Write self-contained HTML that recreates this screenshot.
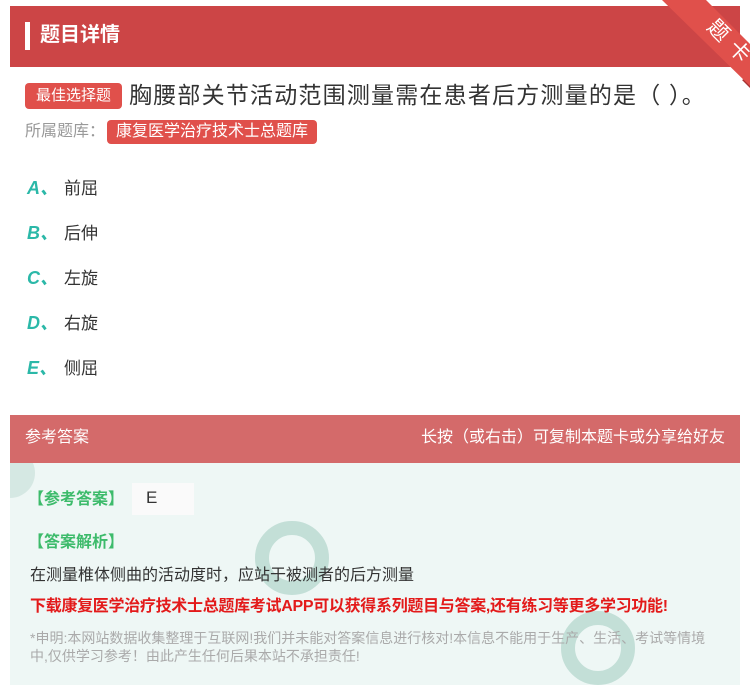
<!DOCTYPE html>
<html><head><meta charset="utf-8"><style>
*{margin:0;padding:0;box-sizing:border-box}
body{width:750px;height:685px;background:#fff;font-family:"Liberation Sans","Noto Sans CJK SC",sans-serif;position:relative;overflow:hidden}
.hd{position:absolute;left:10px;top:6px;width:730px;height:61px;background:#cc4546}
.hd .bar{position:absolute;left:15px;top:16px;width:5px;height:28px;background:#fff}
.hd .t{position:absolute;left:30px;top:15px;color:#fff;font-size:20px;font-weight:bold;line-height:28px}
.q{position:absolute;left:25px;top:80px;font-size:23px;color:#333;line-height:30px;white-space:nowrap;letter-spacing:1.2px}
.tag{display:inline-block;background:#e0504b;color:#fff;font-size:15px;border-radius:4px;padding:0 11px;line-height:26px;vertical-align:3px;margin-right:7px;letter-spacing:0}
.lib{position:absolute;left:25px;top:120px;font-size:16px;color:#999;line-height:24px}
.lib .tag{font-size:16px;line-height:24px;vertical-align:0;margin-left:2px;padding:0 9px}
.opt{position:absolute;left:27px;font-size:17px;color:#333;line-height:24px}
.opt b{color:#2bb8a8;font-style:italic;font-size:18px;display:inline-block;width:37px}
.ab{position:absolute;left:10px;top:415px;width:730px;height:48px;background:#d46a6a;color:#fff;font-size:16px;line-height:46px;padding:0 15px}
.ab span{float:right}
.bd{position:absolute;left:10px;top:463px;width:730px;height:222px;background:#eef7f5;overflow:hidden}
.g{color:#3dbb6b;font-size:16px;font-weight:bold;position:absolute;left:18px}
</style></head><body>
<div class="hd"><div class="bar"></div><div class="t">题目详情</div></div>
<svg width="750" height="100" style="position:absolute;left:0;top:0">
<polygon points="742,80 750,88 750,76" fill="#a83232"/>
<polygon points="662,0 706,0 750,44 750,86" fill="#e0504b"/>
<text x="0" y="0" fill="#fff" font-size="21" font-family="Noto Sans CJK SC, sans-serif" transform="translate(706,28) rotate(45)">题</text>
<text x="0" y="0" fill="#fff" font-size="21" font-family="Noto Sans CJK SC, sans-serif" transform="translate(727,49) rotate(45)">卡</text>
</svg>
<div class="q"><span class="tag">最佳选择题</span>胸腰部关节活动范围测量需在患者后方测量的是（ ）。</div>
<div class="lib">所属题库：<span class="tag">康复医学治疗技术士总题库</span></div>
<div class="opt" style="top:176px"><b>A、</b>前屈</div>
<div class="opt" style="top:221px"><b>B、</b>后伸</div>
<div class="opt" style="top:266px"><b>C、</b>左旋</div>
<div class="opt" style="top:311px"><b>D、</b>右旋</div>
<div class="opt" style="top:356px"><b>E、</b>侧屈</div>
<div class="ab">参考答案<span>长按（或右击）可复制本题卡或分享给好友</span></div>
<div class="bd">
<svg width="730" height="222" style="position:absolute;left:0;top:0">
<circle cx="282" cy="95" r="30" fill="none" stroke="#b8d8cf" stroke-width="14" opacity=".8"/>
<circle cx="588" cy="185" r="30" fill="none" stroke="#b8d8cf" stroke-width="14" opacity=".8"/>
<circle cx="0" cy="10" r="25" fill="#d5e8e3"/>
</svg>
<div class="g" style="top:22px">【参考答案】</div>
<div style="position:absolute;left:122px;top:20px;width:62px;height:32px;background:#fafafa;color:#333;font-size:17px;line-height:30px;padding-left:14px">E</div>
<div class="g" style="top:65px">【答案解析】</div>
<div style="position:absolute;left:20px;top:98px;font-size:16px;color:#333">在测量椎体侧曲的活动度时，应站于被测者的后方测量</div>
<div style="position:absolute;left:20px;top:129px;font-size:16px;color:#e31a1a;font-weight:bold;letter-spacing:-.3px;white-space:nowrap">下载康复医学治疗技术士总题库考试APP可以获得系列题目与答案,还有练习等更多学习功能!</div>
<div style="position:absolute;left:20px;top:166px;width:690px;font-size:14px;color:#aaa;line-height:18px">*申明:本网站数据收集整理于互联网!我们并未能对答案信息进行核对!本信息不能用于生产、生活、考试等情境中,仅供学习参考！由此产生任何后果本站不承担责任!</div>
</div>
</body></html>
